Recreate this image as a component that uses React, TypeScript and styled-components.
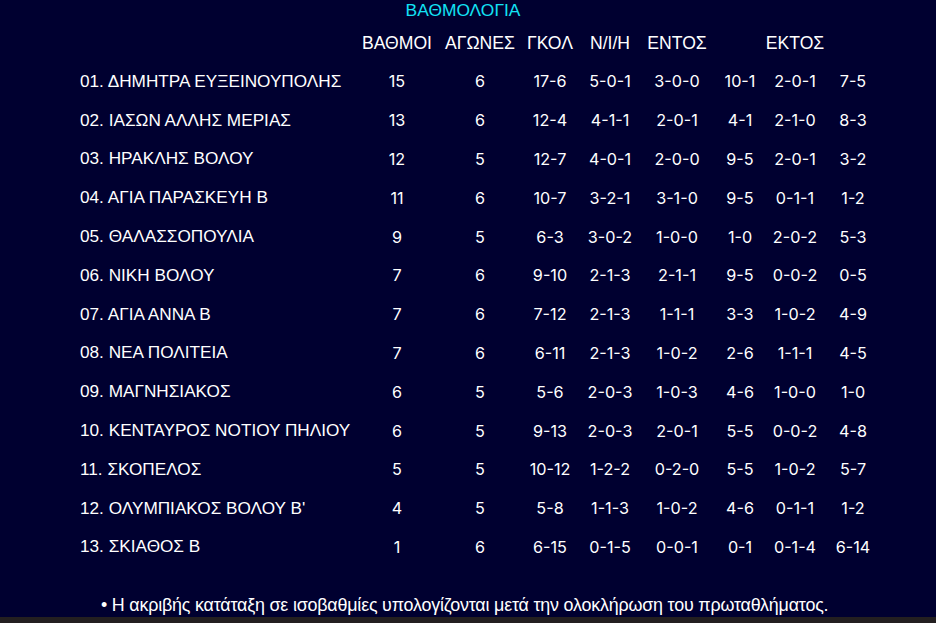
import React from "react";
import styled, { createGlobalStyle } from "styled-components";

const GlobalStyle = createGlobalStyle`
  html, body {
    margin: 0;
    padding: 0;
    background: #231f20;
  }
  body {
    font-family: "Liberation Sans", Arial, sans-serif;
  }
`;

const Page = styled.div`
  width: 936px;
  height: 617px;
  background: #000030;
  color: #ffffff;
  overflow: hidden;
`;

const Title = styled.div`
  color: #12e3f5;
  font-size: 17.4px;
  text-align: center;
  padding-right: 10px;
  line-height: 20px;
`;

const Table = styled.div`
  margin-left: 80px;
  margin-top: 13px;
`;

const COLS = "280px 74px 92px 48px 72px 62px 64px 46px 70px";

const Row = styled.div<{ $header?: boolean }>`
  display: grid;
  grid-template-columns: ${COLS};
  height: ${(p) => (p.$header ? "29px" : "38.8px")};
  align-items: ${(p) => (p.$header ? "start" : "center")};
  font-size: ${(p) => (p.$header ? "17.6px" : "17.2px")};
  white-space: nowrap;
`;

const Name = styled.div``;

const Cell = styled.div<{ $num?: boolean }>`
  display: flex;
  justify-content: center;
  font-family: ${(p) => (p.$num ? "Inter, 'Liberation Sans', sans-serif" : "inherit")};
  font-size: ${(p) => (p.$num ? "16.2px" : "inherit")};
`;

const Note = styled.div`
  font-size: 17.9px;
  margin-top: 29px;
  padding-left: 101px;
  letter-spacing: -0.2px;
`;

type Team = [string, string, string, string, string, string, string, string, string];

const teams: Team[] = [
  ["01. ΔΗΜΗΤΡΑ ΕΥΞΕΙΝΟΥΠΟΛΗΣ", "15", "6", "17-6", "5-0-1", "3-0-0", "10-1", "2-0-1", "7-5"],
  ["02. ΙΑΣΩΝ ΑΛΛΗΣ ΜΕΡΙΑΣ", "13", "6", "12-4", "4-1-1", "2-0-1", "4-1", "2-1-0", "8-3"],
  ["03. ΗΡΑΚΛΗΣ ΒΟΛΟΥ", "12", "5", "12-7", "4-0-1", "2-0-0", "9-5", "2-0-1", "3-2"],
  ["04. ΑΓΙΑ ΠΑΡΑΣΚΕΥΗ Β", "11", "6", "10-7", "3-2-1", "3-1-0", "9-5", "0-1-1", "1-2"],
  ["05. ΘΑΛΑΣΣΟΠΟΥΛΙΑ", "9", "5", "6-3", "3-0-2", "1-0-0", "1-0", "2-0-2", "5-3"],
  ["06. ΝΙΚΗ ΒΟΛΟΥ", "7", "6", "9-10", "2-1-3", "2-1-1", "9-5", "0-0-2", "0-5"],
  ["07. ΑΓΙΑ ΑΝΝΑ Β", "7", "6", "7-12", "2-1-3", "1-1-1", "3-3", "1-0-2", "4-9"],
  ["08. ΝΕΑ ΠΟΛΙΤΕΙΑ", "7", "6", "6-11", "2-1-3", "1-0-2", "2-6", "1-1-1", "4-5"],
  ["09. ΜΑΓΝΗΣΙΑΚΟΣ", "6", "5", "5-6", "2-0-3", "1-0-3", "4-6", "1-0-0", "1-0"],
  ["10. ΚΕΝΤΑΥΡΟΣ ΝΟΤΙΟΥ ΠΗΛΙΟΥ", "6", "5", "9-13", "2-0-3", "2-0-1", "5-5", "0-0-2", "4-8"],
  ["11. ΣΚΟΠΕΛΟΣ", "5", "5", "10-12", "1-2-2", "0-2-0", "5-5", "1-0-2", "5-7"],
  ["12. ΟΛΥΜΠΙΑΚΟΣ ΒΟΛΟΥ Β'", "4", "5", "5-8", "1-1-3", "1-0-2", "4-6", "0-1-1", "1-2"],
  ["13. ΣΚΙΑΘΟΣ Β", "1", "6", "6-15", "0-1-5", "0-0-1", "0-1", "0-1-4", "6-14"],
];

const headers = ["", "ΒΑΘΜΟΙ", "ΑΓΩΝΕΣ", "ΓΚΟΛ", "Ν/Ι/Η", "ΕΝΤΟΣ", "", "ΕΚΤΟΣ", ""];

export default function App() {
  return (
    <Page>
      <GlobalStyle />
      <Title>ΒΑΘΜΟΛΟΓΙΑ</Title>
      <Table>
        <Row $header>
          {headers.map((h, i) => (i === 0 ? <Name key={i} /> : <Cell key={i}>{h}</Cell>))}
        </Row>
        {teams.map((t) => (
          <Row key={t[0]}>
            <Name>{t[0]}</Name>
            {t.slice(1).map((v, i) => (
              <Cell key={i} $num>
                {v}
              </Cell>
            ))}
          </Row>
        ))}
      </Table>
      <Note>• Η ακριβής κατάταξη σε ισοβαθμίες υπολογίζονται μετά την ολοκλήρωση του πρωταθλήματος.</Note>
    </Page>
  );
}
